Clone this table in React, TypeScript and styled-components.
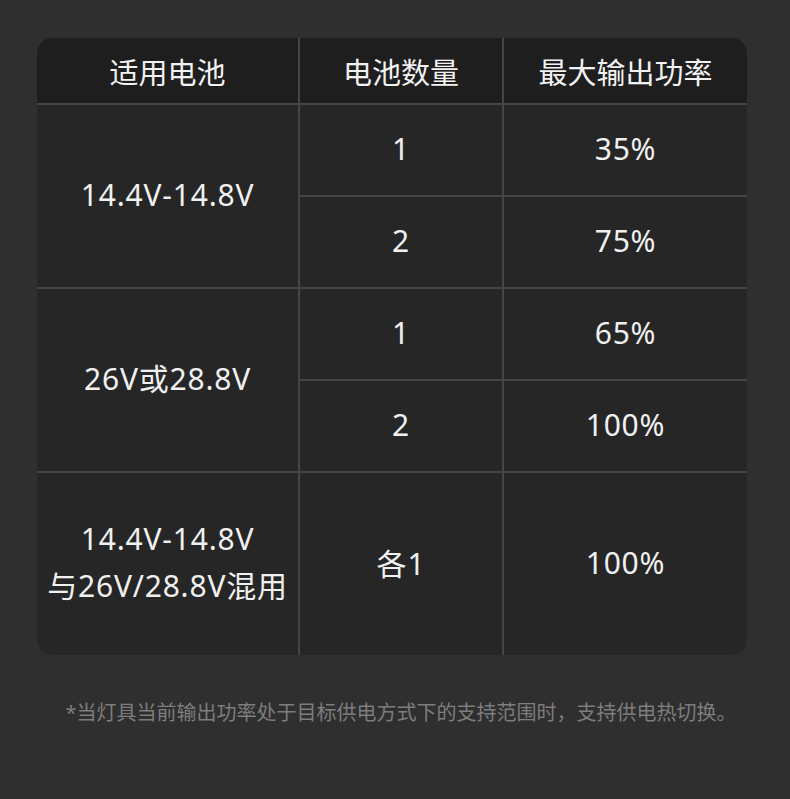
import React from 'react';
import styled, { createGlobalStyle } from 'styled-components';

interface Row {
  battery?: string[];
  span?: number;
  count: string;
  power: string;
}

const rows: Row[] = [
  { battery: ['14.4V-14.8V'], span: 2, count: '1', power: '35%' },
  { count: '2', power: '75%' },
  { battery: ['26V或28.8V'], span: 2, count: '1', power: '65%' },
  { count: '2', power: '100%' },
  { battery: ['14.4V-14.8V', '与26V/28.8V混用'], span: 1, count: '各1', power: '100%' },
];

const App: React.FC = () => {
  return (
    <Page>
      <GlobalStyle />
      <Table>
        <HeadCell>适用电池</HeadCell>
        <HeadCell>电池数量</HeadCell>
        <HeadCell>最大输出功率</HeadCell>
        {rows.map((row, i) => (
          <React.Fragment key={i}>
            {row.battery && (
              <Cell span={row.span ?? 1}>
                <Lines>
                  {row.battery.map(line => (
                    <span key={line}>{line}</span>
                  ))}
                </Lines>
              </Cell>
            )}
            <Cell>{row.count}</Cell>
            <Cell>{row.power}</Cell>
          </React.Fragment>
        ))}
      </Table>
      <Note>*当灯具当前输出功率处于目标供电方式下的支持范围时，支持供电热切换。</Note>
    </Page>
  );
};

export default App;

const GlobalStyle = createGlobalStyle`
  html, body {
    margin: 0;
    padding: 0;
    background: #2f2f2f;
  }
  body {
    font-family: "Noto Sans", "Noto Sans CJK SC", sans-serif;
  }
`;

const Page = styled.div`
  width: 790px;
  height: 799px;
  box-sizing: border-box;
  padding: 38px 0 0 37px;
  background: #2f2f2f;
`;

const Table = styled.div`
  width: 710px;
  display: grid;
  grid-template-columns: 261px 202px 243px;
  grid-template-rows: 65px 90px 90px 90px 90px 182px;
  gap: 2px;
  background: #454545;
  border-radius: 15px;
  overflow: hidden;
`;

const HeadCell = styled.div`
  display: flex;
  align-items: center;
  justify-content: center;
  background: #1e1e1e;
  color: #f2f2f2;
  font-size: 29px;
`;

interface CellProps {
  span?: number;
}

const Cell = styled.div<CellProps>`
  grid-row: span ${props => props.span ?? 1};
  display: flex;
  align-items: center;
  justify-content: center;
  padding-bottom: 4px;
  background: #262626;
  color: #f0f0f0;
  font-size: 30px;
  letter-spacing: 0.8px;
`;

const Lines = styled.div`
  display: flex;
  flex-direction: column;
  align-items: center;
  line-height: 47px;
  white-space: nowrap;
`;

const Note = styled.div`
  margin: 42px 0 0 -31px;
  width: 790px;
  text-align: center;
  color: #7d7d7d;
  font-size: 20px;
`;
